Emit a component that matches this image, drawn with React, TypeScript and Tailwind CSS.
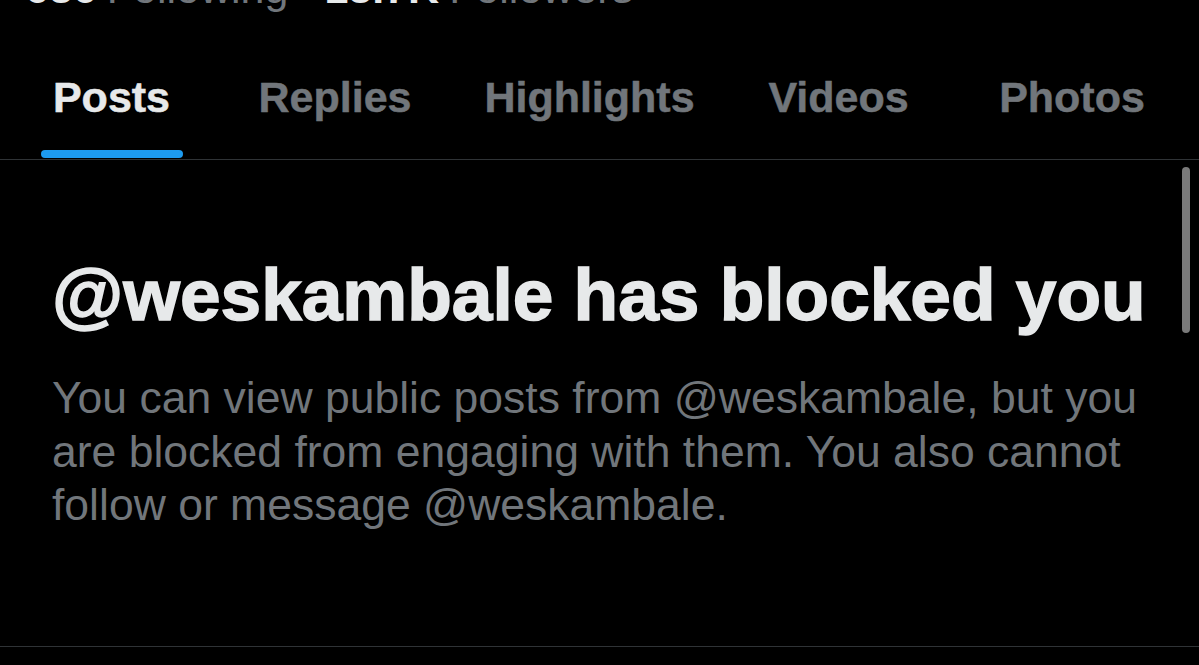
import React from "react";

const tabs = [
  { label: "Posts", w: "w-[223px]", active: true },
  { label: "Replies", w: "w-[224px]", active: false },
  { label: "Highlights", w: "w-[285px]", active: false },
  { label: "Videos", w: "w-[213px]", active: false },
  { label: "Photos", w: "w-[254px]", active: false },
];

export default function App() {
  return (
    <div
      className="relative flex h-[665px] w-[1199px] flex-col overflow-hidden bg-black"
      style={{ fontFamily: '"Liberation Sans", Arial, sans-serif' }}
    >
      {/* stats row, mostly scrolled off */}
      <div className="-mt-[34px] flex h-[44px] items-center whitespace-nowrap pl-[25px] text-[43px] leading-[43px]">
        <span className="font-bold text-[#e7e9ea]">636</span>
        <span className="ml-[10px] text-[#71767b]">Following</span>
        <span className="ml-[36px] font-bold text-[#e7e9ea]">13.7K</span>
        <span className="ml-[10px] text-[#71767b]">Followers</span>
      </div>

      {/* tabs */}
      <div className="flex h-[149px]">
        {tabs.map((t) => (
          <div key={t.label} className={`${t.w} flex flex-col items-center pt-[66px]`}>
            <span
              className={`h-[43px] whitespace-nowrap text-[43px] font-bold leading-[43px] [-webkit-text-stroke:0.5px_currentColor] ${
                t.active ? "text-[#e7e9ea]" : "text-[#71767b]"
              }`}
            >
              {t.label}
            </span>
            {t.active ? (
              <div className="mt-auto mb-px h-[8px] w-[142px] rounded-full bg-[#1d9bf0]" />
            ) : null}
          </div>
        ))}
      </div>
      <div className="h-px w-full bg-[#2f3336]" />

      {/* blocked message */}
      <div className="flex flex-col px-[52px]">
        <h1 className="mt-[99px] h-[72px] whitespace-nowrap text-[73px] font-bold leading-[72px] text-[#e7e9ea] [-webkit-text-stroke:1.5px_#e7e9ea]">
          @weskambale has blocked you
        </h1>
        <p className="mt-[40px] whitespace-nowrap text-[44.5px] leading-[53.5px] text-[#71767b]">
          You can view public posts from @weskambale, but you
          <br />
          are blocked from engaging with them. You also cannot
          <br />
          follow or message @weskambale.
        </p>
      </div>
      <div className="mt-[114px] h-px w-full bg-[#2f3336]" />

      {/* overlay scrollbar */}
      <div className="absolute left-[1182px] top-[167px] h-[166px] w-[8px] rounded-full bg-[#7a7a7a]" />
    </div>
  );
}
